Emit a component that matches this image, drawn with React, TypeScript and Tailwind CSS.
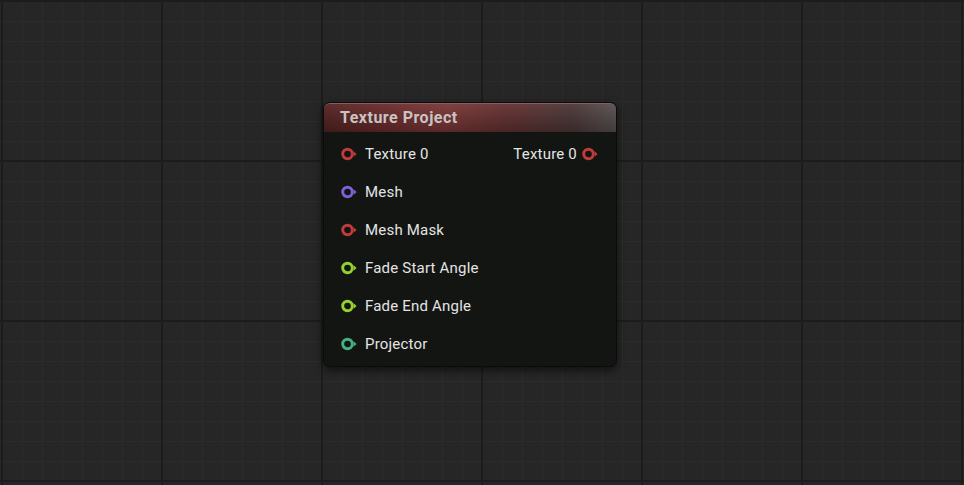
const inputs = [
  { label: "Texture 0", color: "#c23a3a" },
  { label: "Mesh", color: "#7d62d6" },
  { label: "Mesh Mask", color: "#c23a3a" },
  { label: "Fade Start Angle", color: "#96d22c" },
  { label: "Fade End Angle", color: "#96d22c" },
  { label: "Projector", color: "#46b085" },
];

function Pin({ color }: { color: string }) {
  return (
    <svg width="17" height="14" viewBox="0 0 17 14" className="shrink-0">
      <circle cx="6.5" cy="7" r="4.8" fill="#121412" stroke={color} strokeWidth="2.9" />
      <path d="M12.6 4.3 L15.6 7 L12.6 9.7 Z" fill={color} />
    </svg>
  );
}

export default function App() {
  return (
    <div className="relative w-[964px] h-[485px] overflow-hidden bg-[#262626] font-['Roboto',sans-serif] [background-image:linear-gradient(to_right,#1c1c1c_2px,transparent_2px),linear-gradient(to_bottom,#1c1c1c_2px,transparent_2px),linear-gradient(to_right,#2b2b2b_1px,transparent_1px),linear-gradient(to_bottom,#2b2b2b_1px,transparent_1px)] [background-size:160px_160px,160px_160px,20px_20px,20px_20px] [background-position:1px_0px,1px_0px,2px_1px,2px_1px]">
      {/* node */}
      <div className="absolute left-[323px] top-[102px] w-[294px] rounded-[7px] border border-[#0b0b0b] bg-[#131513] shadow-[0_3px_8px_rgba(0,0,0,0.6)]">
        <div className="relative h-[29px] rounded-t-[6px] bg-[linear-gradient(to_right,#552222_0%,#6a2a2a_20%,#7a3636_42%,#643030_62%,#4b3636_85%,#575050_100%)] flex items-center pl-[16px] border-t border-[#8a5e5e]">
          <div className="absolute inset-0 rounded-t-[6px] bg-[linear-gradient(to_bottom,rgba(255,255,255,0.05),rgba(0,0,0,0.25))]" />
          <span className="relative text-[16px] font-bold tracking-[0.5px] text-[#c8c4c4] leading-none">
            Texture Project
          </span>
        </div>
        <div className="pt-[3px] pb-[3px]">
          {inputs.map((row, i) => (
            <div key={i} className="h-[38px] flex items-center pl-[17px] pr-[17px]">
              <div className="flex items-center gap-[7px]">
                <Pin color={row.color} />
                <span className="text-[15px] tracking-[0.2px] text-[#e4e4e4]">{row.label}</span>
              </div>
              {i === 0 && (
                <div className="ml-auto flex items-center gap-[5px]">
                  <span className="text-[15px] tracking-[0.2px] text-[#e4e4e4]">Texture 0</span>
                  <Pin color="#c23a3a" />
                </div>
              )}
            </div>
          ))}
        </div>
      </div>
    </div>
  );
}
